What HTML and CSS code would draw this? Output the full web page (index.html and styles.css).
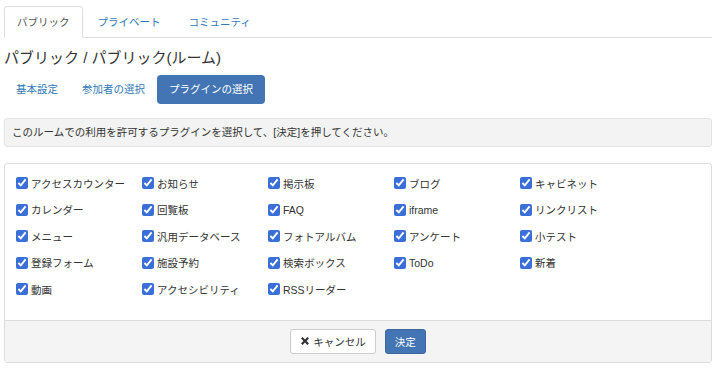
FILE: index.html
```html
<!DOCTYPE html>
<html lang="ja">
<head>
    <meta charset="UTF-8">
    <title>プラグインの選択</title>
    <link rel="stylesheet" href="styles.css">
</head>
<body>
    <div class="wrap">
        <ul class="tabs">
            <li class="tab active"><a href="#">パブリック</a></li>
            <li class="tab"><a href="#">プライベート</a></li>
            <li class="tab"><a href="#">コミュニティ</a></li>
        </ul>

        <h1 class="title">パブリック / パブリック(ルーム)</h1>

        <div class="pills">
            <a href="#" class="pill">基本設定</a>
            <a href="#" class="pill">参加者の選択</a>
            <a href="#" class="pill active">プラグインの選択</a>
        </div>

        <div class="alert">このルームでの利用を許可するプラグインを選択して、[決定]を押してください。</div>

        <form class="panel">
            <div class="panel-body">
                <label class="plugin"><input type="checkbox" checked> アクセスカウンター</label>
                <label class="plugin"><input type="checkbox" checked> お知らせ</label>
                <label class="plugin"><input type="checkbox" checked> 掲示板</label>
                <label class="plugin"><input type="checkbox" checked> ブログ</label>
                <label class="plugin"><input type="checkbox" checked> キャビネット</label>
                <label class="plugin"><input type="checkbox" checked> カレンダー</label>
                <label class="plugin"><input type="checkbox" checked> 回覧板</label>
                <label class="plugin"><input type="checkbox" checked> FAQ</label>
                <label class="plugin"><input type="checkbox" checked> iframe</label>
                <label class="plugin"><input type="checkbox" checked> リンクリスト</label>
                <label class="plugin"><input type="checkbox" checked> メニュー</label>
                <label class="plugin"><input type="checkbox" checked> 汎用データベース</label>
                <label class="plugin"><input type="checkbox" checked> フォトアルバム</label>
                <label class="plugin"><input type="checkbox" checked> アンケート</label>
                <label class="plugin"><input type="checkbox" checked> 小テスト</label>
                <label class="plugin"><input type="checkbox" checked> 登録フォーム</label>
                <label class="plugin"><input type="checkbox" checked> 施設予約</label>
                <label class="plugin"><input type="checkbox" checked> 検索ボックス</label>
                <label class="plugin"><input type="checkbox" checked> ToDo</label>
                <label class="plugin"><input type="checkbox" checked> 新着</label>
                <label class="plugin"><input type="checkbox" checked> 動画</label>
                <label class="plugin"><input type="checkbox" checked> アクセシビリティ</label>
                <label class="plugin"><input type="checkbox" checked> RSSリーダー</label>
            </div>
            <div class="panel-footer">
                <button type="button" class="btn btn-default">
                    <svg class="icon" viewBox="0 0 10 10" width="10" height="10"><path d="M1 2.6 2.6 1 5 3.4 7.4 1 9 2.6 6.6 5 9 7.4 7.4 9 5 6.6 2.6 9 1 7.4 3.4 5z" fill="#333"/></svg>
                    キャンセル
                </button>
                <button type="submit" class="btn btn-primary">決定</button>
            </div>
        </form>
    </div>
</body>
</html>
```

FILE: styles.css
```css
body {
    margin: 0;
    font-family: "Liberation Sans", "Noto Sans CJK JP", sans-serif;
    font-size: 10.5px;
    color: #333;
    background: #fff;
}

a {
    color: #337ab7;
    text-decoration: none;
}

.wrap {
    width: 708px;
    padding: 6px 0 0 4px;
}

.tabs {
    display: flex;
    list-style: none;
    margin: 0;
    padding: 0;
    border-bottom: 1px solid #ddd;
}

.tab {
    margin-bottom: -1px;
    margin-right: 2px;
}

.tab a {
    display: block;
    padding: 0 12px;
    line-height: 30px;
    border: 1px solid transparent;
    border-radius: 4px 4px 0 0;
}

.tab.active a {
    color: #555;
    background: #fff;
    border-color: #ddd #ddd transparent;
}

.title {
    margin: 10px 0 0;
    font-size: 15px;
    font-weight: normal;
    line-height: 20px;
}

.pills {
    display: flex;
    margin-top: 7px;
}

.pill {
    padding: 0 12px;
    line-height: 29px;
    border-radius: 4px;
}

.pill.active {
    color: #fff;
    background: #4374b3;
}

.alert {
    margin-top: 14px;
    padding: 0 7px;
    line-height: 27px;
    background: #f3f3f3;
    border: 1px solid #e3e3e3;
    border-radius: 3px;
}

.panel {
    margin: 16px 0 0;
    border: 1px solid #ddd;
    border-radius: 3px;
}

.panel-body {
    display: grid;
    grid-template-columns: repeat(5, 126px);
    grid-auto-rows: 26.5px;
    padding: 6px 10px 17px 11px;
}

.plugin {
    display: flex;
    align-items: center;
    gap: 3px;
    white-space: nowrap;
}

.plugin input {
    width: 12px;
    height: 12px;
    margin: 0;
    accent-color: #3b6fd8;
}

.panel-footer {
    display: flex;
    justify-content: center;
    gap: 9px;
    padding: 8px;
    background: #f4f4f4;
    border-top: 1px solid #ddd;
}

.btn {
    display: inline-flex;
    align-items: center;
    gap: 3px;
    height: 25px;
    padding: 0 9px;
    font: inherit;
    border: 1px solid #ccc;
    border-radius: 3px;
    cursor: pointer;
}

.btn-default {
    color: #333;
    background: #fff;
}

.btn-primary {
    color: #fff;
    background: #4374b3;
    border-color: #3a67a2;
}
```
